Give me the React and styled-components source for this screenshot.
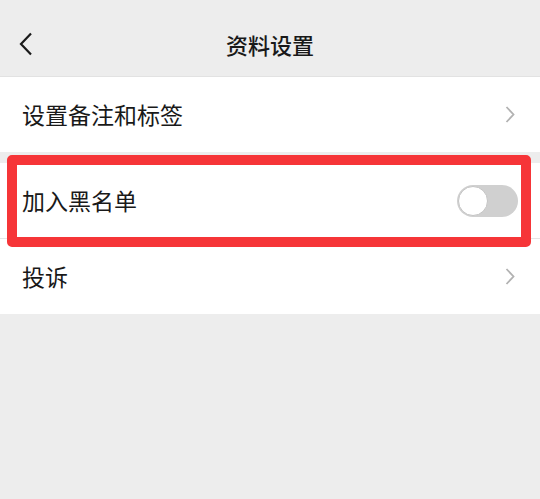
import { useState } from "react";
import styled, { createGlobalStyle } from "styled-components";

const GlobalStyle = createGlobalStyle`
  body {
    margin: 0;
    background: #ededed;
    font-family: "Noto Sans CJK SC", "Noto Sans", sans-serif;
  }
`;

const Page = styled.div`
  min-height: 499px;
  background: #ededed;
  color: #191919;
`;

const Header = styled.div`
  height: 77px;
  box-sizing: border-box;
  padding-top: 12px;
  display: flex;
  align-items: center;
  justify-content: center;
  position: relative;
  border-bottom: 1px solid #e2e2e2;
`;

const BackButton = styled.div`
  position: absolute;
  left: 18px;
  top: 32px;
  width: 16px;
  height: 24px;
`;

const Title = styled.h1`
  margin: 0;
  font-size: 22px;
  font-weight: 500;
  line-height: 1;
`;

const Group = styled.div`
  background: #fff;
  margin-top: ${props => props.gap || 0}px;
`;

const Row = styled.div`
  position: relative;
  height: ${props => props.h || 75}px;
  display: flex;
  align-items: center;
  justify-content: space-between;
  padding: 0 ${props => props.pr || 25}px 0 22px;
  ${props => props.divider && "border-bottom: 1px solid #e5e5e5;"}
`;

const Label = styled.span`
  font-size: 23px;
  line-height: 1;
`;

const Highlight = styled.div`
  position: absolute;
  top: -8px;
  bottom: -9px;
  left: 7px;
  right: 9px;
  border: 10px solid #f63538;
  border-radius: 5px;
  pointer-events: none;
`;

const Track = styled.div`
  width: 61px;
  height: 32px;
  border-radius: 16px;
  background: ${props => (props.on ? "#07c160" : "#d0d0d0")};
  position: relative;
  cursor: pointer;
`;

const Knob = styled.div`
  position: absolute;
  top: 1px;
  left: ${props => (props.on ? "30px" : "1px")};
  width: 28px;
  height: 28px;
  border-radius: 50%;
  background: #fff;
  border: 1px solid #c4c4c4;
`;

function Chevron() {
  return (
    <svg width="10" height="17" viewBox="0 0 10 17">
      <path d="M1.5 1 L8.5 8.5 L1.5 16" fill="none" stroke="#b2b2b2" strokeWidth="1.8" />
    </svg>
  );
}

export default function App() {
  const [blocked, setBlocked] = useState(false);
  return (
    <Page>
      <GlobalStyle />
      <Header>
        <BackButton>
          <svg width="16" height="24" viewBox="0 0 16 24">
            <path d="M13 1.5 L3 12 L13 22.5" fill="none" stroke="#1a1a1a" strokeWidth="2.2" />
          </svg>
        </BackButton>
        <Title>资料设置</Title>
      </Header>
      <Group>
        <Row>
          <Label>设置备注和标签</Label>
          <Chevron />
        </Row>
      </Group>
      <Group gap={11}>
        <Row divider pr={22}>
          <Label>加入黑名单</Label>
          <Track on={blocked} onClick={() => setBlocked(!blocked)}>
            <Knob on={blocked} />
          </Track>
          <Highlight />
        </Row>
        <Row>
          <Label>投诉</Label>
          <Chevron />
        </Row>
      </Group>
    </Page>
  );
}
